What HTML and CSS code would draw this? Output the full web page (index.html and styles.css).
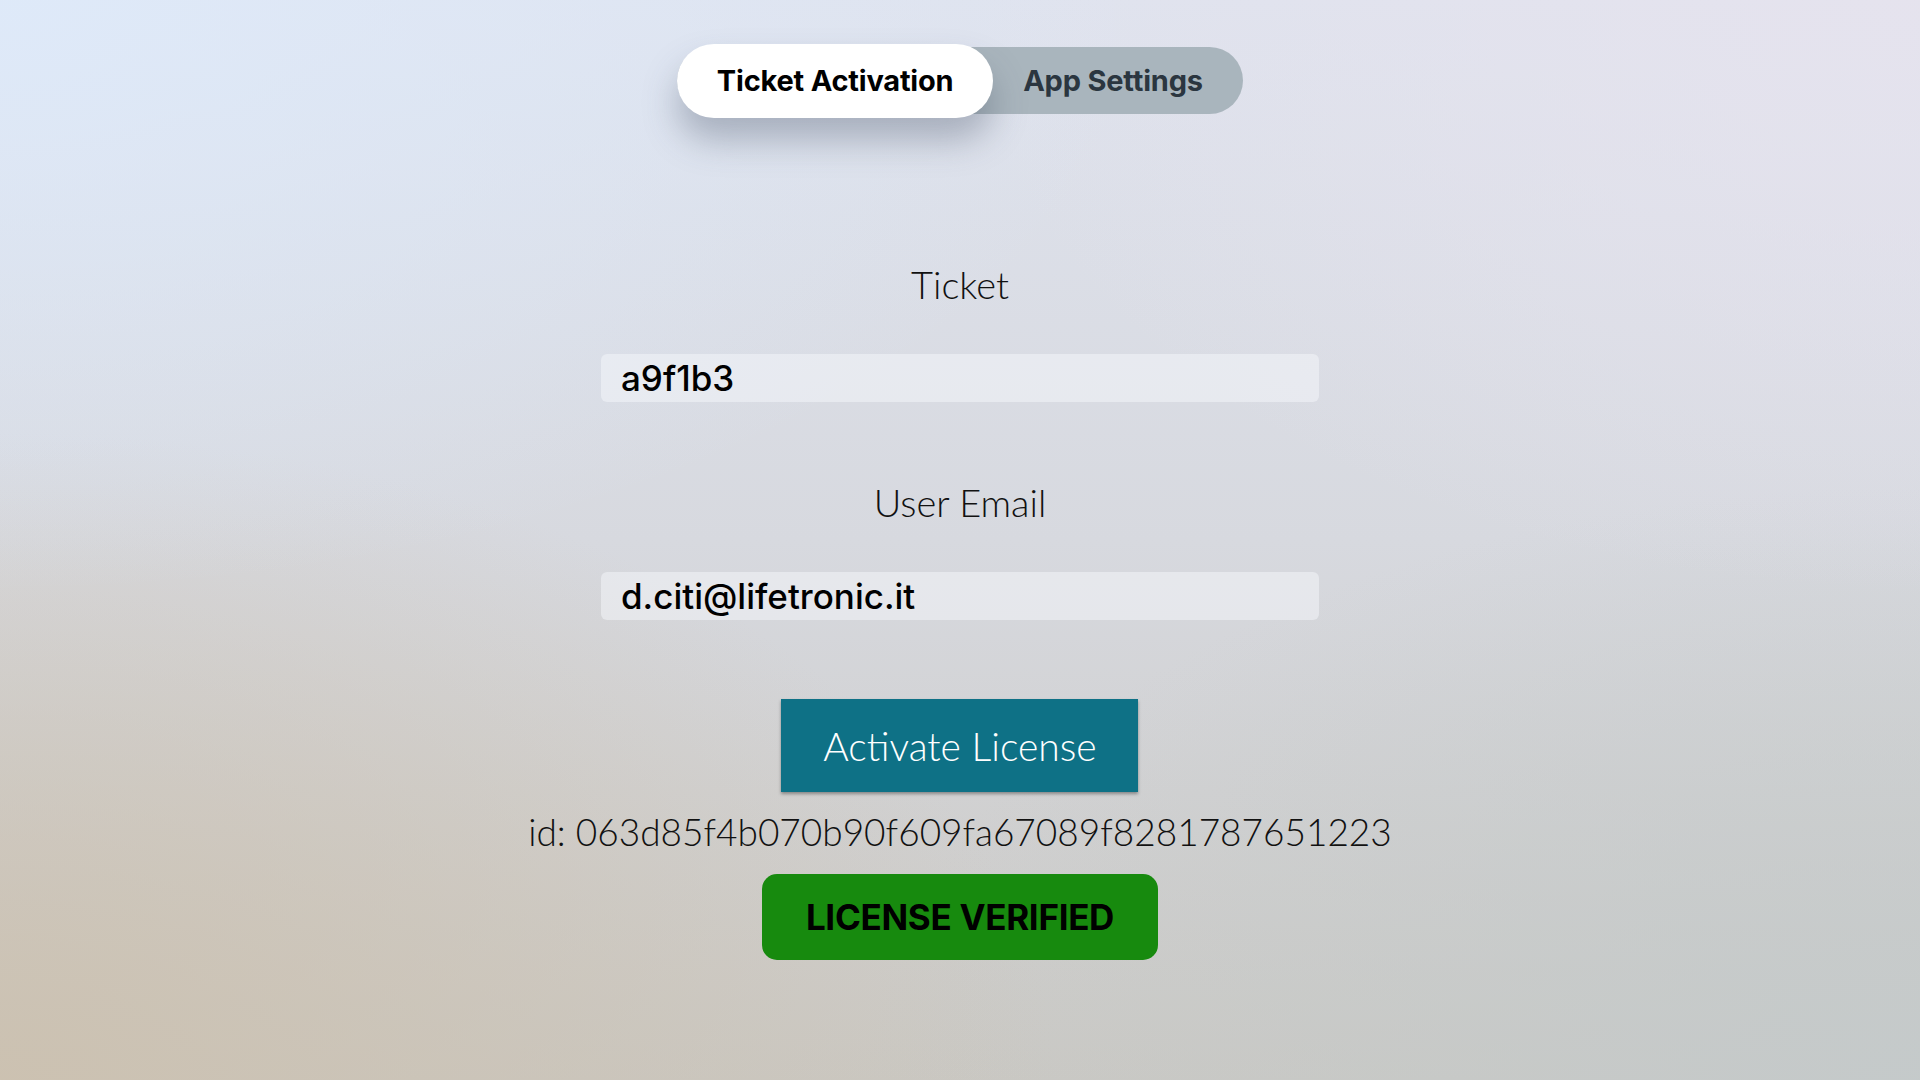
FILE: index.html
```html
<!DOCTYPE html>
<html lang="en">
  <head>
    <meta charset="UTF-8" />
    <meta name="viewport" content="width=device-width, initial-scale=1.0" />
    <title>Ticket Activation</title>
    <link rel="stylesheet" href="styles.css">
  </head>
  <body>
    <nav class="tabs">
      <button class="tab active">Ticket Activation</button>
      <button class="tab">App Settings</button>
    </nav>

    <main class="form">
      <label class="field-label" for="ticket">Ticket</label>
      <input class="field" id="ticket" type="text" value="a9f1b3" />

      <label class="field-label second" for="email">User Email</label>
      <input class="field" id="email" type="email" value="d.citi@lifetronic.it" />

      <button class="activate">Activate License</button>
      <p class="device-id">id: 063d85f4b070b90f609fa67089f8281787651223</p>
      <div class="status">LICENSE VERIFIED</div>
    </main>
  </body>
</html>
```

FILE: styles.css
```css
html, body {
  height: 100%;
}
body {
  margin: 0;
  font-family: Lato, "Open Sans", sans-serif;
  color: #111;
  display: flex;
  flex-direction: column;
  align-items: center;
  background:
    radial-gradient(ellipse 60% 55% at 0% 0%, rgba(222, 234, 250, 0.9), rgba(222, 234, 250, 0) 100%),
    radial-gradient(ellipse 55% 60% at 0% 100%, rgba(204, 193, 176, 0.95), rgba(204, 193, 176, 0) 100%),
    radial-gradient(ellipse 50% 55% at 100% 0%, rgba(230, 227, 238, 0.9), rgba(230, 227, 238, 0) 100%),
    radial-gradient(ellipse 55% 55% at 100% 100%, rgba(196, 202, 203, 0.9), rgba(196, 202, 203, 0) 100%),
    linear-gradient(180deg, #dfe3ee 0%, #d7d9df 50%, #cac8c3 100%);
}

/* top segmented control */
.tabs {
  margin-top: 47px;
  display: flex;
  align-items: center;
  height: 67px;
  background: #a9b5bd;
  border-radius: 34px;
}
.tab {
  border: none;
  background: none;
  font-family: Inter, "Liberation Sans", sans-serif;
  font-weight: 700;
  font-size: 29px;
  letter-spacing: -0.2px;
  color: #2b3640;
  height: 67px;
  padding: 0 40px 0 30px;
  cursor: pointer;
}
.tab.active {
  height: 74px;
  margin: -3px 0;
  width: 316px;
  padding: 0;
  background: #fff;
  color: #000;
  border-radius: 37px;
  box-shadow: 0 22px 34px rgba(70, 80, 100, 0.35);
}

.form {
  display: flex;
  flex-direction: column;
  align-items: center;
}
.field-label {
  margin-top: 147px;
  font-size: 38px;
  font-weight: 300;
  line-height: 46px;
  color: #111;
}
.field-label.second {
  margin-top: 77px;
}
.field {
  margin-top: 47px;
  width: 718px;
  height: 48px;
  box-sizing: border-box;
  padding: 0 20px;
  border: none;
  border-radius: 6px;
  background: rgba(246, 248, 252, 0.5);
  font-family: Inter, "Liberation Sans", sans-serif;
  font-size: 35px;
  font-weight: 500;
  color: #000;
  outline: none;
}

.activate {
  margin-top: 79px;
  width: 357px;
  height: 93px;
  border: none;
  background: #0e7186;
  color: #fff;
  font-family: Lato, "Open Sans", sans-serif;
  font-size: 39px;
  font-weight: 300;
  box-shadow: 0 2px 3px rgba(0, 0, 0, 0.35);
  cursor: pointer;
}
.device-id {
  margin: 17px 0 0;
  font-size: 37px;
  font-weight: 300;
  line-height: 46px;
}
.status {
  margin-top: 19px;
  width: 396px;
  height: 86px;
  display: flex;
  align-items: center;
  justify-content: center;
  background: #178a0e;
  border-radius: 15px;
  font-family: Inter, "Liberation Sans", sans-serif;
  font-weight: 700;
  font-size: 35px;
  letter-spacing: -0.3px;
  color: #000;
}
```
